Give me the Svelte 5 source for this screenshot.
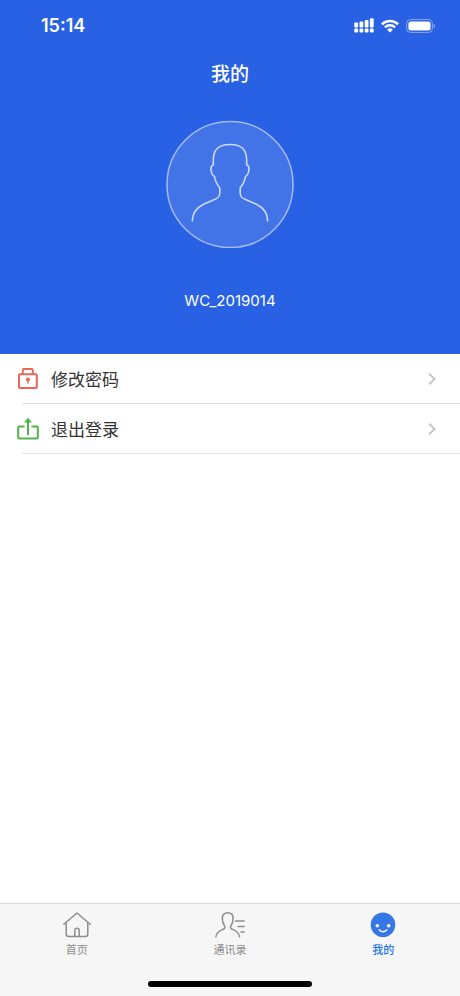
<script>
  const menu = [
    { id: 'password', label: '修改密码' },
    { id: 'logout', label: '退出登录' }
  ];
  const tabs = [
    { id: 'home', label: '首页' },
    { id: 'contacts', label: '通讯录' },
    { id: 'mine', label: '我的' }
  ];
  let active = $state('mine');
</script>

<div class="screen">
  <header>
    <div class="status">
      <span class="time">15:14</span>
      <div class="indicators">
        <svg width="20" height="15" viewBox="0 0 20 15" fill="#fff" aria-hidden="true">
          <rect x="0.3" y="4.5" width="3.8" height="5" rx="1" />
          <rect x="5.5" y="3.5" width="3.8" height="6" rx="1" />
          <rect x="10.7" y="2" width="3.8" height="7.5" rx="1" />
          <rect x="15.9" y="0.3" width="3.8" height="9.2" rx="1" />
          <rect x="0.3" y="10.6" width="3.8" height="3.8" rx="1" />
          <rect x="5.5" y="10.6" width="3.8" height="3.8" rx="1" />
          <rect x="10.7" y="10.6" width="3.8" height="3.8" rx="1" />
          <rect x="15.9" y="10.6" width="3.8" height="3.8" rx="1" />
        </svg>
        <svg width="18" height="14" viewBox="0 0 18 14" fill="none" stroke="#fff" stroke-width="2.5" aria-hidden="true">
          <path d="M0.9 5.3a11.6 11.6 0 0 1 16.2 0" />
          <path d="M3.9 8.4a7.3 7.3 0 0 1 10.2 0" />
          <path d="M9 13.6L6.1 10.7a4.2 4.2 0 0 1 5.8 0z" fill="#fff" stroke="none" />
        </svg>
        <svg width="30" height="14" viewBox="0 0 30 14" aria-hidden="true">
          <rect x="0.6" y="0.6" width="25.8" height="12.8" rx="4" fill="none" stroke="#fff" stroke-opacity="0.45" />
          <rect x="2.4" y="2.4" width="22.2" height="9.2" rx="2.5" fill="#fff" />
          <path d="M27.7 4.8c1.8.7 1.8 3.7 0 4.4z" fill="#fff" fill-opacity="0.5" />
        </svg>
      </div>
    </div>
    <h1>我的</h1>
    <svg class="avatar" viewBox="0 0 128 128" fill="none" role="img" aria-label="头像">
      <circle cx="64" cy="64.5" r="63" fill="#fff" fill-opacity="0.12" stroke="#a3bbf4" stroke-width="1.5" />
      <path
        d="M26.300 101C26.300 93 31 87.500 38 84L48.500 79.500C52.500 77.800 53.800 76.500 53.800 73V68C51 64.500 49 60.500 48.500 56.500C46.500 55.500 45.300 52.500 45 49.500C44.800 47.500 45.200 45.500 47.400 45C46.600 32 49.500 24.500 64 24.500C78.500 24.500 81.400 32 80.600 45C82.800 45.500 83.200 47.500 83 49.500C82.700 52.500 81.500 55.500 79.500 56.500C79 60.500 77 64.500 74.200 68V73C74.200 76.500 75.500 77.800 79.500 79.500L90 84C97 87.500 101.700 93 101.700 101"
        stroke="#cbdafb" stroke-width="1.6" stroke-linejoin="round" stroke-linecap="round"
      />
    </svg>
    <p class="account">WC_2019014</p>
  </header>

  <main>
    <ul>
      {#each menu as item (item.id)}
        <li>
          <button type="button" class="row">
            {#if item.id === 'password'}
              <svg width="22" height="24" viewBox="0 0 22 24" fill="none" stroke="#e9675a" stroke-width="2" aria-hidden="true">
                <rect x="2" y="7.200" width="17.800" height="13.800" rx="1" />
                <path d="M5.800 7V3a1 1 0 0 1 1-1h8a1 1 0 0 1 1 1V7" />
                <circle cx="10.900" cy="12.600" r="2" fill="#e9675a" stroke="none" />
                <path d="M10.900 13v3.600" stroke-width="1.500" />
              </svg>
            {:else}
              <svg width="22" height="24" viewBox="0 0 22 24" fill="none" stroke="#50b54b" stroke-width="2" aria-hidden="true">
                <path d="M7.500 9.600H2.200a1 1 0 0 0-1 1v10a1 1 0 0 0 1 1h17.600a1 1 0 0 0 1-1v-10a1 1 0 0 0-1-1h-5.300" />
                <path d="M11 18V4" />
                <path d="M11 0.800l4 4.700H7z" fill="#50b54b" stroke="none" />
              </svg>
            {/if}
            <span>{item.label}</span>
            <svg class="chevron" width="8" height="12" viewBox="0 0 8 12" fill="none" stroke="#c4c4c8" stroke-width="1.900" aria-hidden="true">
              <path d="M1.200 0.800L6.600 6L1.200 11.200" />
            </svg>
          </button>
        </li>
      {/each}
    </ul>
  </main>

  <nav>
    <div class="tabs">
      {#each tabs as tab (tab.id)}
        <button type="button" class="tab" class:active={active === tab.id} onclick={() => (active = tab.id)}>
          {#if tab.id === 'home'}
            <svg width="30" height="28" viewBox="0 0 30 28" fill="none" stroke="#8e8e8e" stroke-width="1.500" stroke-linecap="round" stroke-linejoin="round" aria-hidden="true">
              <path d="M1.800 13.200L15 2L28.200 13.200" />
              <path d="M4.200 11.500V23a2.500 2.500 0 0 0 2.500 2.500h16.600a2.500 2.500 0 0 0 2.500-2.500V11.500" />
              <path d="M12.800 25V19.500a2.200 2.200 0 0 1 4.400 0V25" />
            </svg>
          {:else if tab.id === 'contacts'}
            <svg width="30" height="28" viewBox="0 0 30 28" fill="none" stroke="#8e8e8e" stroke-width="1.500" stroke-linecap="round" aria-hidden="true">
              <path d="M0.800 25.800C1.500 21 4.500 19.800 7.500 18.500C10 17.500 10.200 16.300 9.500 14.800C8 12.500 7.300 10.500 7.300 7.500C7.300 3.500 9.500 1.800 12.700 1.800C15.900 1.800 18.100 3.500 18.100 7.500C18.100 10.500 17.400 12.500 15.900 14.800C15.200 16.300 15.400 17.500 17.900 18.500C20.900 19.800 23.900 21 24.600 25.800" />
              <path d="M20.500 10h8.700M23 15.500h6.200M26 21h3.200" />
            </svg>
          {:else}
            <svg width="30" height="28" viewBox="0 0 30 28" fill="none" aria-hidden="true">
              <circle cx="15" cy="13.700" r="12.300" fill="#3577e5" />
              <circle cx="9.300" cy="14.700" r="1.800" fill="#fff" />
              <circle cx="20.700" cy="14.700" r="1.800" fill="#fff" />
              <path d="M11.300 18.900c1.700 2.400 5.700 2.400 7.400 0" stroke="#fff" stroke-width="1.600" stroke-linecap="round" />
            </svg>
          {/if}
          <span>{tab.label}</span>
        </button>
      {/each}
    </div>
    <div class="home-bar"></div>
  </nav>
</div>

<style>
  :global(body) {
    margin: 0;
  }
  .screen {
    display: flex;
    flex-direction: column;
    min-height: 100vh;
    background: #fff;
    font-family: Inter, "Noto Sans CJK SC", sans-serif;
  }
  header {
    display: flex;
    flex-direction: column;
    align-items: center;
    padding-bottom: 40px;
    background: #2861e4;
    color: #fff;
  }
  .status {
    display: flex;
    align-items: center;
    justify-content: space-between;
    align-self: stretch;
    height: 51px;
    padding: 0 24px 0 41px;
  }
  .time {
    font-size: 18px;
    font-weight: 600;
  }
  .indicators {
    display: flex;
    align-items: center;
    gap: 7px;
  }
  h1 {
    margin: 10px 0 31px;
    font-size: 19px;
    line-height: 28px;
    font-weight: 500;
  }
  .avatar {
    width: 128px;
    height: 128px;
  }
  .account {
    margin: 40px 0 0;
    font-size: 15px;
    line-height: 26px;
  }
  main {
    flex: 1;
  }
  ul {
    margin: 0;
    padding: 0;
    list-style: none;
  }
  li {
    position: relative;
  }
  li::after {
    content: "";
    position: absolute;
    right: 0;
    bottom: 0;
    left: 22px;
    height: 1px;
    background: #e2e2e4;
  }
  button {
    border: 0;
    background: none;
    font-family: inherit;
    cursor: pointer;
  }
  .row {
    display: flex;
    align-items: center;
    gap: 12px;
    width: 100%;
    height: 50px;
    padding: 0 24px 0 17px;
    color: #333;
    font-size: 17px;
    text-align: left;
  }
  .row span {
    padding-bottom: 2px;
  }
  .chevron {
    margin-left: auto;
  }
  nav {
    display: flex;
    flex-direction: column;
    align-items: center;
    border-top: 1px solid #d8d8d8;
    background: #f6f6f6;
    padding-bottom: 9px;
  }
  .tabs {
    display: flex;
    align-self: stretch;
  }
  .tab {
    display: flex;
    flex: 1;
    flex-direction: column;
    align-items: center;
    height: 77px;
    padding: 7px 0 0;
    color: #8c8c8c;
    font-size: 11px;
    line-height: 22px;
  }
  .tab.active {
    color: #1f74ec;
    font-weight: 500;
  }
  .home-bar {
    width: 164px;
    height: 6px;
    border-radius: 3px;
    background: #000;
  }
</style>
